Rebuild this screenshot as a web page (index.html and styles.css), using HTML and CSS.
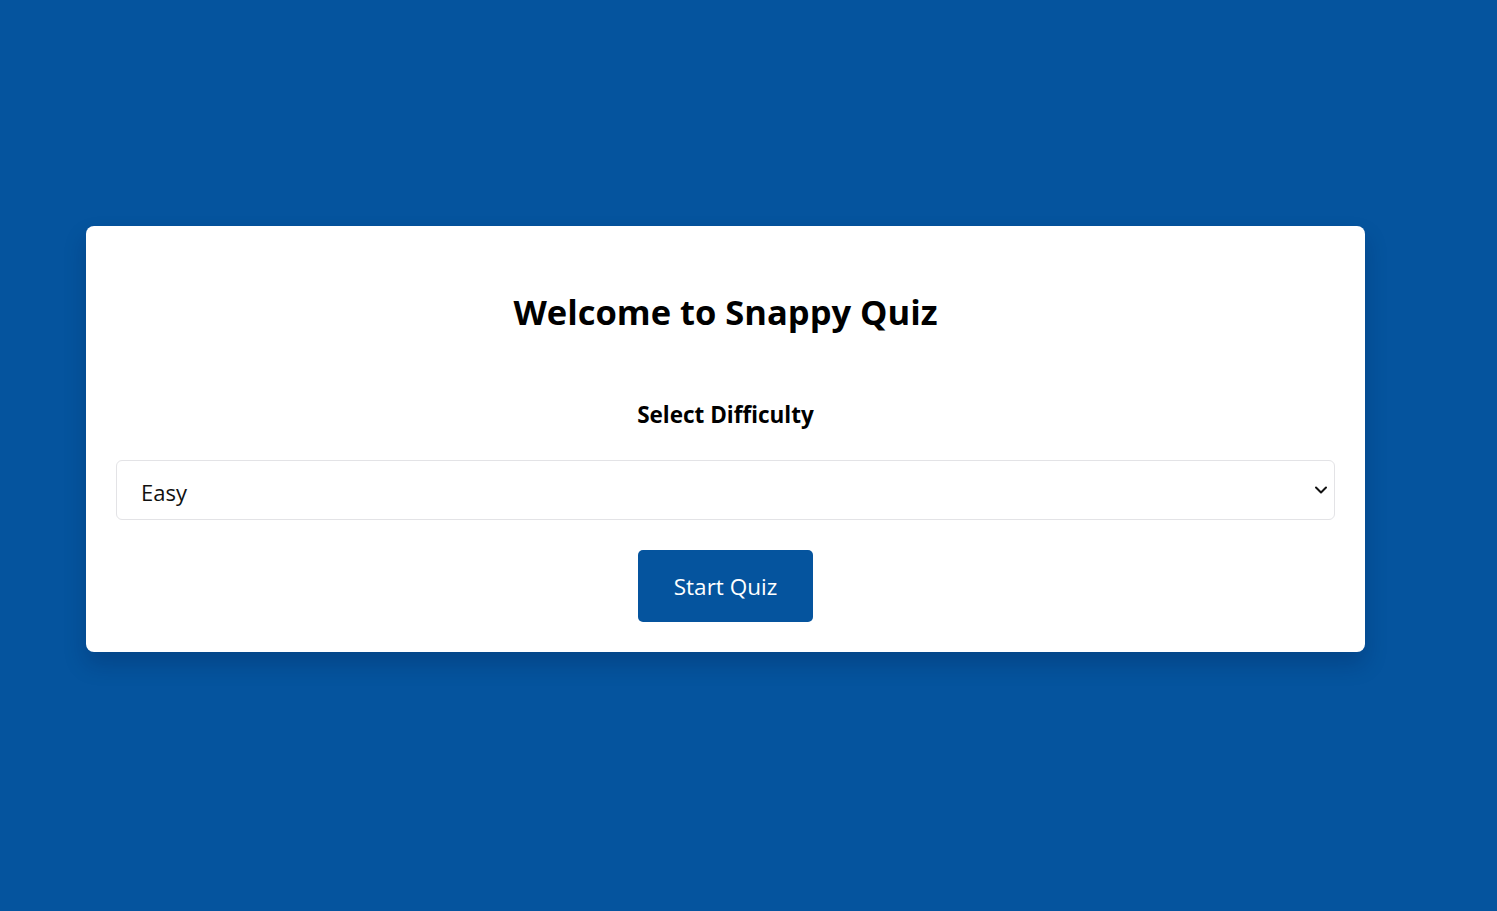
FILE: index.html
```html
<!DOCTYPE html>
<html lang="en">
<head>
<meta charset="utf-8">
<title>Snappy Quiz</title>
<link rel="stylesheet" href="styles.css">
</head>
<body>
<main class="page">
  <section class="card">
    <h1 class="title">Welcome to Snappy Quiz</h1>
    <h2 class="label">Select Difficulty</h2>
    <div class="select-wrap">
      <select class="select">
        <option>Easy</option>
        <option>Medium</option>
        <option>Hard</option>
      </select>
      <svg class="chevron" width="14" height="10" viewBox="0 0 14 10" aria-hidden="true">
        <path d="M2 2.5 L7 7.5 L12 2.5" fill="none" stroke="#111" stroke-width="2" stroke-linecap="round" stroke-linejoin="round"/>
      </svg>
    </div>
    <div class="actions">
      <button class="btn">Start Quiz</button>
    </div>
  </section>
</main>
</body>
</html>
```

FILE: styles.css
```css
html, body {
  margin: 0;
  padding: 0;
}
body {
  background: #05549e;
  font-family: "Open Sans", "Noto Sans", "Liberation Sans", sans-serif;
  color: #000;
  min-height: 911px;
}
.page {
  padding: 226px 132px 0 86px;
}
.card {
  background: #fff;
  border-radius: 8px;
  padding: 30px;
  box-shadow: 0 12px 22px rgba(0, 20, 60, 0.22);
  text-align: center;
}
.title {
  margin: 36px 0 0;
  font-size: 34.5px;
  line-height: 40px;
  font-weight: 700;
}
.label {
  margin: 68px 0 0;
  font-size: 22.5px;
  line-height: 30px;
  font-weight: 700;
}
.select-wrap {
  position: relative;
  margin-top: 30px;
}
.select {
  appearance: none;
  -webkit-appearance: none;
  display: block;
  width: 100%;
  height: 60px;
  box-sizing: border-box;
  border: 1px solid #e3e3e6;
  border-radius: 6px;
  background: #fff;
  padding: 4px 24px 0;
  font-family: inherit;
  font-size: 22px;
  color: #111;
}
.chevron {
  position: absolute;
  right: 7px;
  top: 25px;
}
.actions {
  margin-top: 30px;
  display: flex;
  justify-content: center;
}
.btn {
  width: 175px;
  height: 72px;
  border: 0;
  border-radius: 5px;
  background: #05549e;
  color: #fff;
  font-family: inherit;
  font-size: 22.5px;
  padding-top: 2px;
}
```
